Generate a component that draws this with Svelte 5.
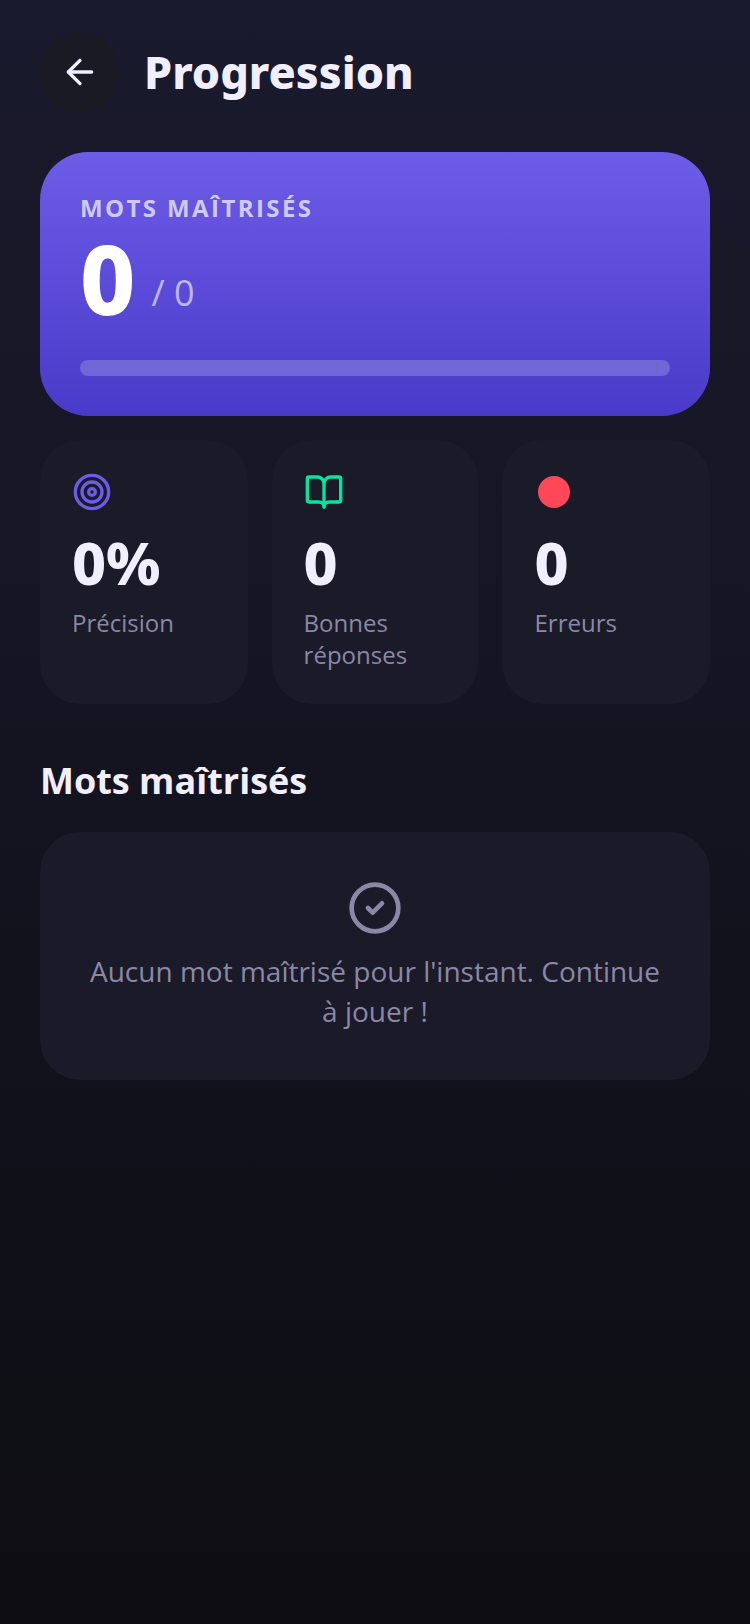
<script>
  let total = $state(0);
  let mastered = $state(0);

  const stats = [
    { icon: "target", value: "0%", label: "Précision" },
    { icon: "book", value: "0", label: "Bonnes réponses" },
    { icon: "dot", value: "0", label: "Erreurs" }
  ];
</script>

<main class="page">
  <header class="top">
    <button class="back" aria-label="Retour">
      <svg viewBox="0 0 24 24" width="40" height="40" fill="none" stroke="currentColor" stroke-width="2" stroke-linecap="round" stroke-linejoin="round">
        <path d="m12 19-7-7 7-7" />
        <path d="M19 12H5" />
      </svg>
    </button>
    <h1>Progression</h1>
  </header>

  <section class="hero">
    <div class="hero-label">MOTS MAÎTRISÉS</div>
    <div class="hero-count">
      <span class="big">{mastered}</span>
      <span class="of">/ {total}</span>
    </div>
    <div class="track"></div>
  </section>

  <section class="stats">
    {#each stats as s}
      <div class="stat">
        <svg class="stat-icon {s.icon}" viewBox="0 0 24 24" width="40" height="40" fill="none" stroke="currentColor" stroke-width="2" stroke-linecap="round" stroke-linejoin="round">
          {#if s.icon === "target"}
            <circle cx="12" cy="12" r="10" />
            <circle cx="12" cy="12" r="6" />
            <circle cx="12" cy="12" r="2" />
          {:else if s.icon === "book"}
            <path d="M12 7v14" />
            <path d="M3 18a1 1 0 0 1-1-1V4a1 1 0 0 1 1-1h5a4 4 0 0 1 4 4 4 4 0 0 1 4-4h5a1 1 0 0 1 1 1v13a1 1 0 0 1-1 1h-6a3 3 0 0 0-3 3 3 3 0 0 0-3-3z" />
          {:else}
            <circle cx="12" cy="12" r="9.6" fill="currentColor" stroke="none" />
          {/if}
        </svg>
        <div class="value">{s.value}</div>
        <div class="label">{s.label}</div>
      </div>
    {/each}
  </section>

  <h2>Mots maîtrisés</h2>

  <section class="empty">
    <svg viewBox="0 0 24 24" width="56" height="56" fill="none" stroke="currentColor" stroke-width="2" stroke-linecap="round" stroke-linejoin="round">
      <circle cx="12" cy="12" r="10" />
      <path d="m9 12 2 2 4-4" />
    </svg>
    <p>Aucun mot maîtrisé pour l'instant. Continue à jouer !</p>
  </section>
</main>

<style>
  :global(body) {
    margin: 0;
    font-family: "Open Sans", "Noto Sans", sans-serif;
    background: #0d0d12;
  }

  .page {
    box-sizing: border-box;
    min-height: 1624px;
    padding: 32px 40px 40px;
    background: linear-gradient(180deg, #1a1a2e 0%, #0d0d12 100%);
    color: #f0eeff;
  }

  .top {
    display: flex;
    align-items: center;
    gap: 24px;
    height: 80px;
  }

  .back {
    width: 80px;
    height: 80px;
    padding: 0;
    border: 0;
    border-radius: 50%;
    background: #1a1a24;
    color: #f0eeff;
    display: flex;
    align-items: center;
    justify-content: center;
  }

  h1 {
    margin: 0;
    font-family: "Noto Sans", sans-serif;
    font-size: 45px;
    font-weight: 800;
    line-height: 1.2;
  }

  .hero {
    margin-top: 40px;
    height: 264px;
    box-sizing: border-box;
    padding: 40px 40px 0;
    border-radius: 48px;
    background: linear-gradient(180deg, #6c5ce7 0%, #4a3ac9 100%);
  }

  .hero-label {
    font-size: 24px;
    font-weight: 700;
    letter-spacing: 2.4px;
    line-height: 32px;
    color: rgba(255, 255, 255, 0.7);
  }

  .hero-count {
    display: flex;
    align-items: flex-end;
    gap: 16px;
    height: 108px;
  }

  .big {
    font-family: "Noto Sans", sans-serif;
    font-size: 96px;
    font-weight: 800;
    line-height: 108px;
    color: #fff;
  }

  .of {
    font-size: 36px;
    line-height: 48px;
    padding-bottom: 15px;
    color: rgba(255, 255, 255, 0.6);
  }

  .track {
    height: 16px;
    margin-top: 28px;
    border-radius: 8px;
    background: rgba(255, 255, 255, 0.2);
  }

  .stats {
    display: grid;
    grid-template-columns: 207.6px 206.9px 1fr;
    gap: 24px;
    margin-top: 24px;
  }

  .stat {
    box-sizing: border-box;
    height: 264px;
    padding: 32px;
    border-radius: 40px;
    background: #1a1a28;
  }

  .stat-icon {
    display: block;
  }

  .target { color: #6c5ce7; }
  .book { color: #00e5a0; }
  .dot { color: #ff4757; }

  .value {
    margin-top: 12px;
    font-family: "Noto Sans", sans-serif;
    font-size: 59px;
    font-weight: 800;
    line-height: 76px;
  }

  .label {
    margin-top: 7px;
    font-size: 24px;
    line-height: 32px;
    color: #8a88a6;
  }

  h2 {
    margin: 54px 0 0;
    font-size: 36px;
    font-weight: 700;
    line-height: 46px;
  }

  .empty {
    box-sizing: border-box;
    height: 248px;
    margin-top: 28px;
    padding: 48px 40px 0;
    border-radius: 40px;
    background: #1a1a28;
    color: #8a88a6;
    display: flex;
    flex-direction: column;
    align-items: center;
    text-align: center;
  }

  .empty p {
    margin: 15px 0 0;
    font-size: 28px;
    line-height: 40px;
  }
</style>
